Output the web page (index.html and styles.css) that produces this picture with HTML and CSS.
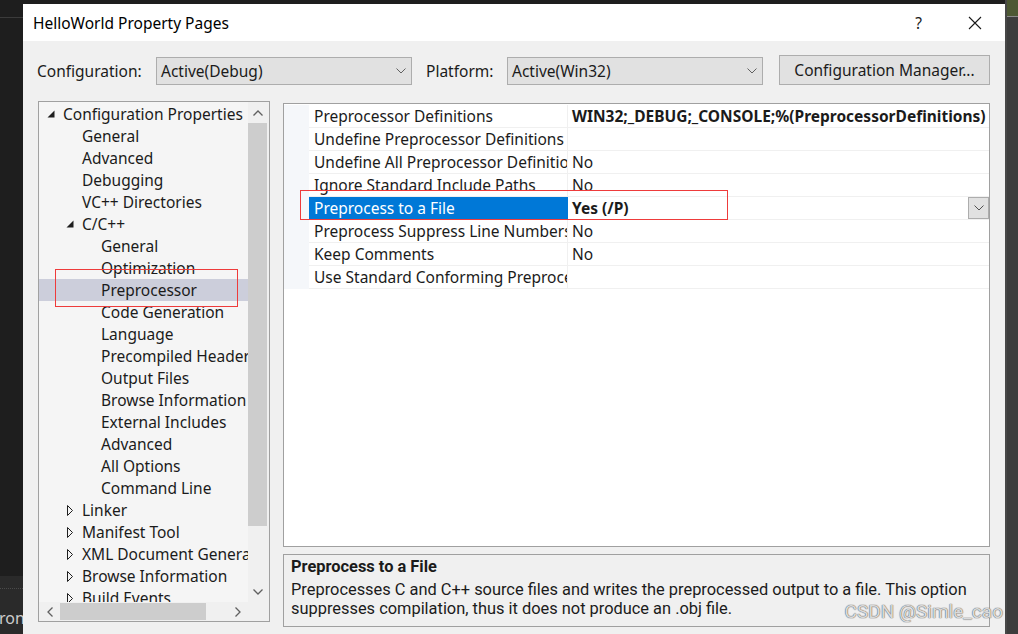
FILE: index.html
```html
<!doctype html>
<html lang="en">
<head>
<meta charset="utf-8">
<title>HelloWorld Property Pages</title>
<link rel="stylesheet" href="styles.css">
</head>
<body>
<div class="screen">

  <div class="edge-left">
    <div class="edge-top"></div>
    <div class="edge-fill"></div>
    <div class="edge-bottom">
      <div class="edge-dots"></div>
      <span class="edge-text">ron</span>
    </div>
  </div>

  <div class="dialog">
    <div class="titlebar">
      <span class="title">HelloWorld Property Pages</span>
      <span class="help">?</span>
      <svg class="close" width="14" height="14" viewBox="0 0 14 14">
        <path d="M1 1 L13 13 M13 1 L1 13" stroke="#1a1a1a" stroke-width="1.1" fill="none"/>
      </svg>
    </div>

    <div class="dialog-body">
      <div class="config-row">
        <span class="label">Configuration:</span>
        <div class="combo">
          <span class="combo-text">Active(Debug)</span>
          <svg class="chev" width="10" height="6" viewBox="0 0 10 6"><path d="M0.5 0.5 L5 5 L9.5 0.5" stroke="#606060" fill="none"/></svg>
        </div>
        <span class="label platform">Platform:</span>
        <div class="combo">
          <span class="combo-text">Active(Win32)</span>
          <svg class="chev" width="10" height="6" viewBox="0 0 10 6"><path d="M0.5 0.5 L5 5 L9.5 0.5" stroke="#606060" fill="none"/></svg>
        </div>
        <button class="btn">Configuration Manager...</button>
      </div>

      <div class="main">
        <div class="tree">
          <div class="tree-list">
            <div class="node lvl-1"><span class="twist"><svg width="8" height="8" viewBox="0 0 8 8"><polygon points="7.5,0.5 7.5,7.5 0.5,7.5" fill="#1e1e1e"/></svg></span>Configuration Properties</div>
            <div class="node lvl-2"><span class="twist"></span>General</div>
            <div class="node lvl-2"><span class="twist"></span>Advanced</div>
            <div class="node lvl-2"><span class="twist"></span>Debugging</div>
            <div class="node lvl-2"><span class="twist"></span>VC++ Directories</div>
            <div class="node lvl-2-open"><span class="twist"><svg width="8" height="8" viewBox="0 0 8 8"><polygon points="7.5,0.5 7.5,7.5 0.5,7.5" fill="#1e1e1e"/></svg></span>C/C++</div>
            <div class="node lvl-3">General</div>
            <div class="node lvl-3">Optimization</div>
            <div class="node lvl-3 selected">Preprocessor</div>
            <div class="node lvl-3">Code Generation</div>
            <div class="node lvl-3">Language</div>
            <div class="node lvl-3">Precompiled Headers</div>
            <div class="node lvl-3">Output Files</div>
            <div class="node lvl-3">Browse Information</div>
            <div class="node lvl-3">External Includes</div>
            <div class="node lvl-3">Advanced</div>
            <div class="node lvl-3">All Options</div>
            <div class="node lvl-3">Command Line</div>
            <div class="node lvl-2-closed"><span class="twist"><svg width="7" height="11" viewBox="0 0 7 11"><polygon points="0.5,0.5 5.5,5.5 0.5,10.5" fill="none" stroke="#1e1e1e"/></svg></span>Linker</div>
            <div class="node lvl-2-closed"><span class="twist"><svg width="7" height="11" viewBox="0 0 7 11"><polygon points="0.5,0.5 5.5,5.5 0.5,10.5" fill="none" stroke="#1e1e1e"/></svg></span>Manifest Tool</div>
            <div class="node lvl-2-closed"><span class="twist"><svg width="7" height="11" viewBox="0 0 7 11"><polygon points="0.5,0.5 5.5,5.5 0.5,10.5" fill="none" stroke="#1e1e1e"/></svg></span>XML Document Generator</div>
            <div class="node lvl-2-closed"><span class="twist"><svg width="7" height="11" viewBox="0 0 7 11"><polygon points="0.5,0.5 5.5,5.5 0.5,10.5" fill="none" stroke="#1e1e1e"/></svg></span>Browse Information</div>
            <div class="node lvl-2-closed"><span class="twist"><svg width="7" height="11" viewBox="0 0 7 11"><polygon points="0.5,0.5 5.5,5.5 0.5,10.5" fill="none" stroke="#1e1e1e"/></svg></span>Build Events</div>
          </div>

          <div class="vscroll">
            <div class="sb-btn up"><svg width="10" height="6" viewBox="0 0 10 6"><path d="M0.5 5.5 L5 1 L9.5 5.5" stroke="#606060" stroke-width="1.3" fill="none"/></svg></div>
            <div class="vthumb"></div>
            <div class="sb-space"></div>
            <div class="sb-btn down"><svg width="10" height="6" viewBox="0 0 10 6"><path d="M0.5 0.5 L5 5 L9.5 0.5" stroke="#606060" stroke-width="1.3" fill="none"/></svg></div>
          </div>

          <div class="hscroll">
            <div class="sb-btn left"><svg width="6" height="10" viewBox="0 0 6 10"><path d="M5.5 0.5 L1 5 L5.5 9.5" stroke="#606060" stroke-width="1.3" fill="none"/></svg></div>
            <div class="hthumb"></div>
            <div class="sb-space"></div>
            <div class="sb-btn right"><svg width="6" height="10" viewBox="0 0 6 10"><path d="M0.5 0.5 L5 5 L0.5 9.5" stroke="#606060" stroke-width="1.3" fill="none"/></svg></div>
          </div>
          <div class="sb-corner"></div>
        </div>

        <div class="side">
          <div class="props">
            <div class="prop">
              <div class="gutter"></div>
              <div class="pname">Preprocessor Definitions</div>
              <div class="pvalue bold">WIN32;_DEBUG;_CONSOLE;%(PreprocessorDefinitions)</div>
            </div>
            <div class="prop">
              <div class="gutter"></div>
              <div class="pname">Undefine Preprocessor Definitions</div>
              <div class="pvalue"></div>
            </div>
            <div class="prop">
              <div class="gutter"></div>
              <div class="pname">Undefine All Preprocessor Definitions</div>
              <div class="pvalue">No</div>
            </div>
            <div class="prop">
              <div class="gutter"></div>
              <div class="pname">Ignore Standard Include Paths</div>
              <div class="pvalue">No</div>
            </div>
            <div class="prop active">
              <div class="gutter"></div>
              <div class="pname">Preprocess to a File</div>
              <div class="pvalue bold">
                <span class="pvalue-text">Yes (/P)</span>
                <span class="drop"><svg width="10" height="6" viewBox="0 0 10 6"><path d="M0.5 0.5 L5 5 L9.5 0.5" stroke="#505050" fill="none"/></svg></span>
              </div>
            </div>
            <div class="prop">
              <div class="gutter"></div>
              <div class="pname">Preprocess Suppress Line Numbers</div>
              <div class="pvalue">No</div>
            </div>
            <div class="prop">
              <div class="gutter"></div>
              <div class="pname">Keep Comments</div>
              <div class="pvalue">No</div>
            </div>
            <div class="prop">
              <div class="gutter"></div>
              <div class="pname">Use Standard Conforming Preprocessor</div>
              <div class="pvalue"></div>
            </div>
          </div>

          <div class="desc">
            <div class="desc-title">Preprocess to a File</div>
            <div class="desc-text">Preprocesses C and C++ source files and writes the preprocessed output to a file. This option suppresses compilation, thus it does not produce an .obj file.</div>
          </div>
        </div>
      </div>
    </div>
  </div>

  <div class="edge-right">
    <div class="edge-right-top"></div>
  </div>

  <div class="mark mark-grid"></div>
  <div class="mark mark-tree"></div>
  <div class="watermark">CSDN @Simle_cao</div>
</div>
</body>
</html>
```

FILE: styles.css
```css
* {
  box-sizing: border-box;
}

body {
  margin: 0;
  background: #1e1e1e;
  font-family: "Noto Sans", "Open Sans", sans-serif;
  font-size: 15.5px;
  color: #1b1b1b;
}

.screen {
  position: relative;
  display: flex;
  width: 1018px;
  height: 634px;
  overflow: hidden;
}

/* desktop edges behind the dialog */
.edge-left {
  width: 23px;
  display: flex;
  flex-direction: column;
  background: #1e1e1e;
}

.edge-top {
  height: 18px;
  border-bottom: 1px solid #3b3b3b;
}

.edge-fill {
  flex: 1;
}

.edge-bottom {
  height: 58px;
  background: #2a2a2a;
  padding-top: 12px;
}

.edge-dots {
  height: 2px;
  border-top: 1px dotted #4a4a4a;
}

.edge-text {
  display: block;
  margin-top: 19px;
  margin-left: -1px;
  color: #cccccc;
  font-size: 16px;
  line-height: 18px;
}

.edge-right {
  width: 13px;
  background: #3d3d3d;
  border-left: 2px solid #474747;
}

.edge-right-top {
  height: 17px;
  background: #4d5833;
  border-bottom: 1px solid #8a8a8a;
}

/* dialog */
.dialog {
  width: 982px;
  margin-top: 4px;
  background: #f0f0f0;
  display: flex;
  flex-direction: column;
}

.titlebar {
  height: 37px;
  background: #ffffff;
  display: flex;
  align-items: center;
  padding-left: 10px;
  padding-right: 23px;
}

.title {
  color: #000;
}

.help {
  margin-left: auto;
  margin-right: 46px;
  color: #1a1a1a;
}

.close {
  display: block;
}

.dialog-body {
  padding: 14px 15px 0 14px;
}

.config-row {
  display: flex;
  align-items: flex-end;
  height: 30px;
}

.label {
  line-height: 28px;
  width: 119px;
  flex: none;
}

.label.platform {
  margin-left: 14px;
  width: 81px;
}

.combo {
  width: 256px;
  flex: none;
  height: 28px;
  background: #e1e1e1;
  border: 1px solid #adadad;
  display: flex;
  align-items: center;
  padding: 0 4px 0 4px;
}

.combo-text {
  flex: 1;
}

.chev {
  display: block;
  margin-right: 1px;
}

.btn {
  margin-left: 16px;
  width: 211px;
  height: 30px;
  font: inherit;
  color: inherit;
  background: #e1e1e1;
  border: 1px solid #adadad;
  padding: 0;
}

/* main area */
.main {
  display: grid;
  grid-template-columns: 232px 707px;
  column-gap: 13px;
  margin-top: 16px;
  margin-left: 1px;
}

.tree {
  height: 521px;
  border: 1px solid #a0a0a0;
  display: grid;
  grid-template-columns: 1fr 21px;
  grid-template-rows: 1fr 19px;
  background: #f0f0f0;
}

.tree-list {
  background: #f5f5f5;
  overflow: hidden;
  padding-top: 1px;
}

.node {
  height: 22px;
  line-height: 22px;
  white-space: nowrap;
  display: flex;
  align-items: center;
}

.twist {
  width: 19px;
  flex: none;
  display: flex;
  align-items: center;
  padding-left: 3px;
}

.twist svg {
  display: block;
}

.lvl-1 {
  padding-left: 5px;
}

.lvl-2,
.lvl-2-open {
  padding-left: 24px;
}

.lvl-2-closed {
  padding-left: 24px;
}

.lvl-2-closed .twist {
  padding-left: 4px;
}

.lvl-3 {
  padding-left: 62px;
}

.node.selected {
  background: #cccedb;
}

.vscroll {
  display: flex;
  flex-direction: column;
  background: #f0f0f0;
}

.hscroll {
  display: flex;
  background: #f0f0f0;
}

.sb-btn {
  display: flex;
  align-items: center;
  justify-content: center;
  flex: none;
}

.vscroll .sb-btn {
  height: 21px;
  width: 19px;
}

.hscroll .sb-btn {
  width: 21px;
}

.vthumb {
  width: 19px;
  height: 403px;
  background: #cdcdcd;
}

.hthumb {
  width: 146px;
  margin: 1px 0;
  background: #cdcdcd;
}

.sb-space {
  flex: 1;
}

.sb-corner {
  background: #f0f0f0;
}

/* property grid */
.side {
  display: flex;
  flex-direction: column;
  margin-top: 2px;
}

.props {
  height: 444px;
  border: 1px solid #a0a0a0;
  background: #ffffff;
  padding-top: 1px;
}

.prop {
  display: grid;
  grid-template-columns: 25px 259px 1fr;
  height: 23px;
}

.gutter {
  background: #f5f7fa;
}

.pname {
  padding-left: 5px;
  border-bottom: 1px solid #f0f0f0;
  border-right: 1px solid #f0f0f0;
  line-height: 22px;
  white-space: nowrap;
  overflow: hidden;
}

.pvalue {
  padding-left: 4px;
  border-bottom: 1px solid #f0f0f0;
  line-height: 22px;
  white-space: nowrap;
  overflow: hidden;
  display: flex;
}

.pvalue-text {
  flex: 1;
}

.bold {
  font-weight: bold;
}

.prop.active .pname {
  background: #0078d7;
  color: #ffffff;
  border-right-color: #0078d7;
}

.drop {
  width: 21px;
  height: 22px;
  background: #e1e1e1;
  border: 1px solid #adadad;
  display: flex;
  align-items: center;
  justify-content: center;
}

.desc {
  margin-top: 7px;
  height: 73px;
  border: 1px solid #a0a0a0;
  background: #f0f0f0;
  padding: 2px 7px 0 7px;
  font-family: Roboto, sans-serif;
  font-size: 16.4px;
}

.desc-title {
  font-weight: bold;
  line-height: 20px;
}

.desc-text {
  line-height: 19px;
  margin-top: 3px;
  width: 690px;
}

/* annotations drawn over the screenshot */
.mark {
  position: absolute;
  border: 1px solid #ee3b3b;
}

.mark-grid {
  left: 300px;
  top: 190px;
  width: 428px;
  height: 30px;
}

.mark-tree {
  left: 55px;
  top: 269px;
  width: 183px;
  height: 38px;
}

.watermark {
  position: absolute;
  right: 15px;
  top: 600px;
  font-family: Roboto, sans-serif;
  font-size: 19px;
  color: rgba(255, 255, 255, 0.8);
  text-shadow: 0 0 1px #555, 0 0 1px #555;
}
```
